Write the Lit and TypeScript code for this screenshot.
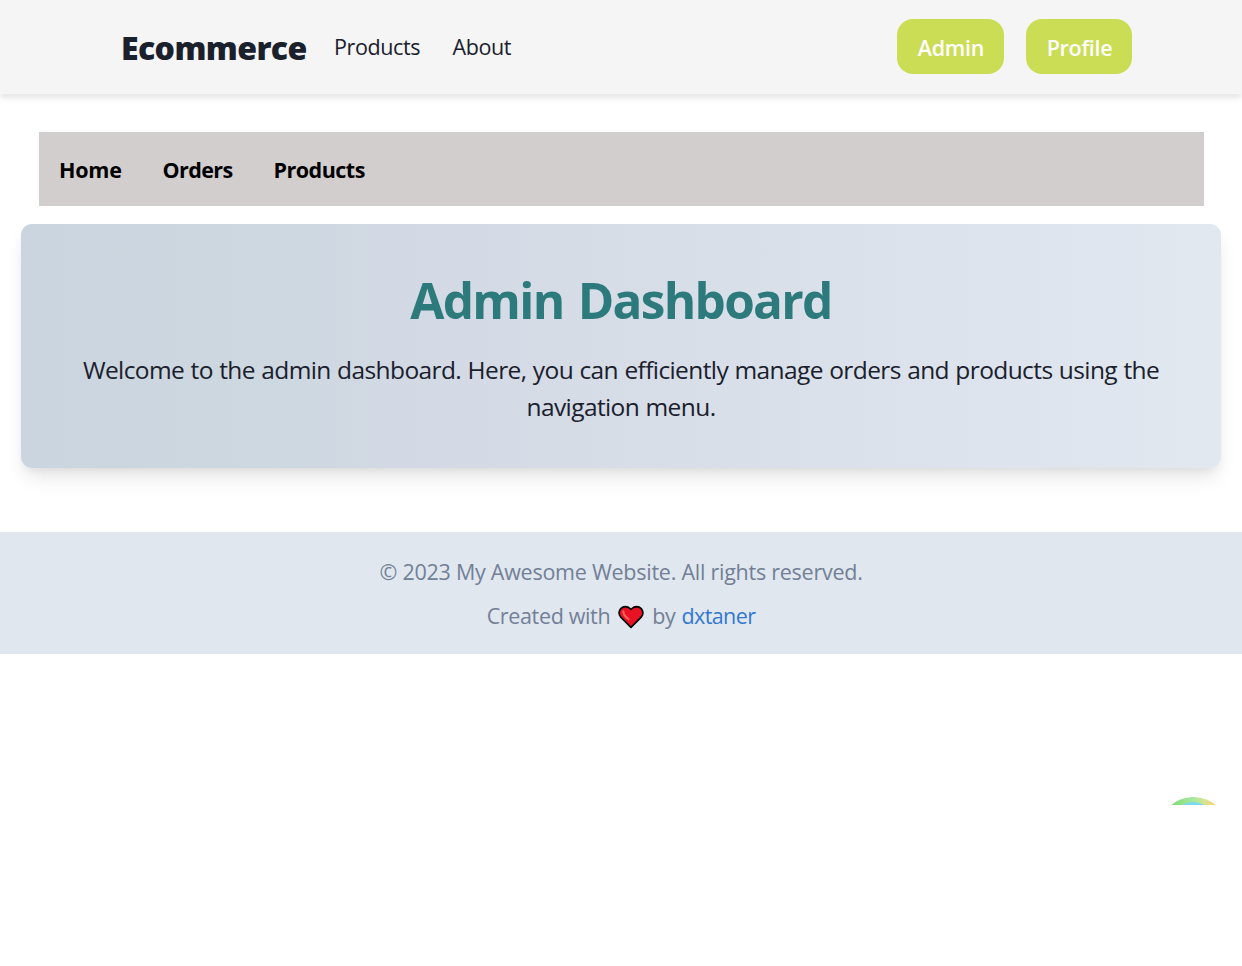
import { LitElement, html, css } from "lit";
import { customElement } from "lit/decorators.js";

@customElement("app-root")
class AppRoot extends LitElement {
  static styles = css`
    * { box-sizing: border-box; }
    :host {
      display: block;
      min-height: 966px;
      background: #fff;
      color: #1a202c;
      font-family: "Segoe UI", "Open Sans", "Noto Sans", sans-serif;
      font-size: 21.5px;
      line-height: 32px;
    }
    a { color: inherit; text-decoration: none; white-space: nowrap; }
    header {
      display: flex;
      align-items: center;
      height: 94px;
      padding: 0 110px 0 121px;
      background: #f5f5f5;
      box-shadow: 0 4px 6px rgba(0, 0, 0, 0.1);
    }
    .brand { width: 213px; font-size: 32px; font-weight: 800; line-height: 44px; letter-spacing: -0.6px; padding-top: 2px; }
    .link { width: 118.5px; letter-spacing: -0.4px; }
    .actions { display: flex; gap: 22px; margin-left: auto; }
    .button {
      display: flex;
      align-items: center;
      justify-content: center;
      width: 107px;
      height: 55px;
      margin-top: -1px;
      padding: 2px 0 0 1px;
      border-radius: 16px;
      background: #cbdd55;
      color: #fff;
      font-weight: 600;
      letter-spacing: -0.3px;
    }
    .button:last-child { width: 106px; }
    nav {
      display: flex;
      align-items: center;
      height: 74px;
      margin: 38px 38px 0 39px;
      padding: 2px 19px 0 20px;
      background: #d2cecd;
      color: #000;
      font-weight: 700;
      letter-spacing: -0.5px;
    }
    .home { width: 103.5px; letter-spacing: -0.2px; }
    .orders { width: 111px; letter-spacing: -0.6px; }
    .card {
      height: 244px;
      margin: 18px 21px 0;
      padding: 40px 42px 0;
      border-radius: 11px;
      background: linear-gradient(to right, #cbd5df, #ced8e1 23%, #d2d9e4 31%, #e1e8f0);
      box-shadow: 0 13px 20px -4px rgba(0, 0, 0, 0.1), 0 5px 8px -2px rgba(0, 0, 0, 0.05);
      text-align: center;
    }
    h1 { margin: 0; color: #2c7a7b; font-size: 49.5px; line-height: 72px; font-weight: 700; letter-spacing: -1.7px; word-spacing: 3px; }
    .intro { margin: 15px 0 0; font-size: 24.5px; line-height: 37.4px; letter-spacing: -0.6px; word-spacing: 0.6px; }
    footer {
      display: flex;
      flex-direction: column;
      align-items: center;
      gap: 12px;
      height: 122px;
      margin-top: 64px;
      padding-top: 24px;
      background: #e1e7ef;
      color: #718096;
      letter-spacing: -0.25px;
    }
    footer p { margin: 0; }
    .credit { display: flex; align-items: center; letter-spacing: -0.35px; }
    .credit svg { width: 26px; height: 24px; margin: 1px 8px 0; }
    .author { margin-left: 6px; color: #3278cf; letter-spacing: -0.6px; }
    .bubble { position: absolute; left: 1171px; top: 797px; width: 45px; height: 8px; }
  `;

  render() {
    return html`
      <header>
        <a class="brand">Ecommerce</a>
        <a class="link">Products</a>
        <a class="link">About</a>
        <div class="actions">
          <a class="button">Admin</a>
          <a class="button">Profile</a>
        </div>
      </header>
      <nav>
        <a class="home">Home</a>
        <a class="orders">Orders</a>
        <a>Products</a>
      </nav>
      <section class="card">
        <h1>Admin Dashboard</h1>
        <p class="intro">Welcome to the admin dashboard. Here, you can efficiently manage orders and products using the navigation menu.</p>
      </section>
      <footer>
        <p>© 2023 My Awesome Website. All rights reserved.</p>
        <p class="credit">
          <span>Created with</span>
          <svg viewBox="0 0 26 24">
            <path d="M13 22.300 2.800 12.200C.5 9.700.5 5.900 2.800 3.600 5.400 1 9.400 1 12 3.500l1 1 1-1C16.600 1 20.600 1 23.200 3.600c2.300 2.300 2.300 6.100 0 8.600Z" fill="#e81224" stroke="#000" stroke-width="1.700" stroke-linejoin="round"/>
            <path d="M5.300 6.300c0 3.500 2 5.600 5.300 7.900" fill="none" stroke="#f4665b" stroke-width="2" stroke-linecap="round"/>
          </svg>
          <span>by</span>
          <a class="author">dxtaner</a>
        </p>
      </footer>
      <svg class="bubble" viewBox="0 0 45 8">
        <defs>
          <linearGradient id="ring" gradientUnits="userSpaceOnUse" x1="0" y1="0" x2="45" y2="0">
            <stop offset="0" stop-color="#7edb72"/>
            <stop offset=".5" stop-color="#a9e8a0"/>
            <stop offset=".75" stop-color="#d9e393"/>
            <stop offset="1" stop-color="#ffd064"/>
          </linearGradient>
        </defs>
        <circle cx="22.500" cy="34.300" r="34.300" fill="url(#ring)"/>
        <circle cx="22.500" cy="26.500" r="21.500" fill="#7bd9ee"/>
      </svg>
    `;
  }
}
